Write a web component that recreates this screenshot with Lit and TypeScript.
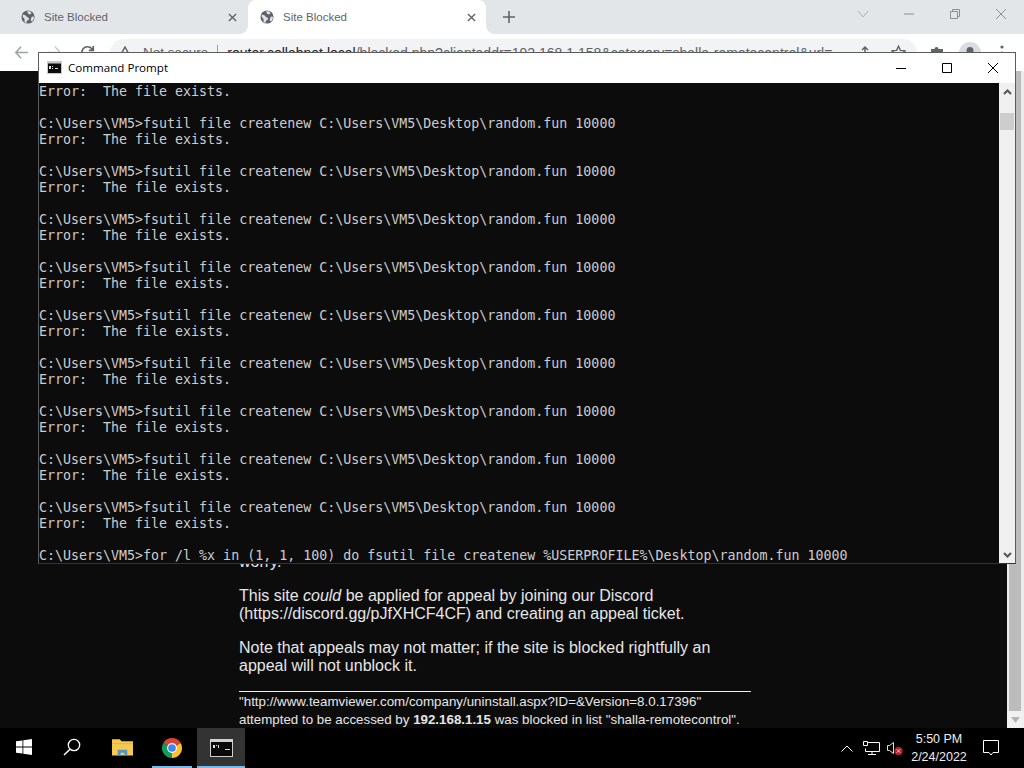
import { LitElement, html, css } from "lit";
import { customElement } from "lit/decorators.js";

const CMD = "C:\\Users\\VM5>fsutil file createnew C:\\Users\\VM5\\Desktop\\random.fun 10000";
const ERR = "Error:  The file exists.";
const lines: string[] = [ERR, ""];
for (let i = 0; i < 9; i++) lines.push(CMD, ERR, "");
lines.push("C:\\Users\\VM5>for /l %x in (1, 1, 100) do fsutil file createnew %USERPROFILE%\\Desktop\\random.fun 10000");

const globe = html`<svg class="fav" viewBox="0 0 16 16"><circle cx="8" cy="8" r="7.5" fill="#5f6368"/><path d="M2 5l3 1 2 2 2 1v2l-2 1-1 3-2-2v-3L2 8zM8 1l3 1 1 2-2 1-2-1-1-2zM12 8l2-1 1 2-2 4-2-1z" fill="#dee1e6"/></svg>`;
const tabClose = html`<svg class="tabx" viewBox="0 0 10 10"><path d="M1 1l8 8M9 1l-8 8" stroke="#5f6368" stroke-width="1.5"/></svg>`;

@customElement("app-root")
export class AppRoot extends LitElement {
  static styles = css`
    :host { display: block; width: 1024px; height: 768px; overflow: hidden; position: relative; background: #000; font-family: "Liberation Sans", Arial, sans-serif; }
    .browser { height: 728px; display: flex; flex-direction: column; }
    .tabstrip { height: 34px; background: #e3e6e9; display: flex; align-items: stretch; color: #5f6368; font-size: 11.5px; }
    .tab { width: 239px; display: flex; align-items: center; padding: 0 0 0 21px; box-sizing: border-box; gap: 9px; position: relative; }
    .tab.active { background: #fff; border-radius: 8px 8px 0 0; margin-left: 9px; width: 238px; padding: 0 8px 0 12px; }
    .tab.active::before, .tab.active::after { content: ""; position: absolute; bottom: 0; width: 8px; height: 8px; }
    .tab.active::before { left: -8px; background: radial-gradient(circle at 0 0, transparent 7.5px, #fff 8px); }
    .tab.active::after { right: -8px; background: radial-gradient(circle at 100% 0, transparent 7.5px, #fff 8px); }
    .tab span { flex: 1; }
    .fav { width: 14px; height: 14px; }
    .tabx { width: 9px; height: 9px; margin-right: 2.5px; }
    .plus { width: 14px; height: 14px; margin: 10px 0 0 16px; }
    .chrome-btns { margin-left: auto; display: flex; align-items: center; gap: 34px; padding: 0 17px 6px 0; }
    .chrome-btns svg { width: 12px; height: 12px; display: block; }
    .toolbar { height: 37px; background: #fff; display: flex; align-items: center; padding: 0 20px 0 14px; color: #5f6368; font-size: 14px; overflow: hidden; }
    .toolbar .nav { width: 15px; height: 15px; margin-right: 18px; flex: none; }
    .toolbar .nav.last { margin-right: 15px; }
    .omni { flex: 1; height: 28px; border-radius: 14px; background: #f1f3f4; display: flex; align-items: center; padding: 0 11px 0 8px; white-space: nowrap; overflow: hidden; min-width: 0; }
    .warn { flex: none; margin-right: 11px; }
    .ns { font-size: 13.5px; flex: none; }
    .omni b { font-weight: 400; color: #202124; }
    .omni i { display: inline-block; width: 1px; height: 16px; background: #9aa0a6; margin: 0 9px; flex: none; }
    .url { flex: 1; min-width: 0; overflow: hidden; }
    .omni svg.act { flex: none; margin-left: 18px; }
    .tool { flex: none; }
    .puzzle { margin-left: 13px; }
    .avatar { margin-left: 14px; }
    .menu { margin-left: 19px; }
    .page { flex: 1; min-height: 0; display: flex; background: #0c0c0c; overflow: hidden; }
    .content { margin-left: 239px; width: 512px; padding-top: 482px; color: #e6e6e6; font-size: 16px; line-height: 18px; flex: none; }
    .content p { margin: 0 0 16px; }
    .content hr { border: 0; height: 1px; background: #f0f0f0; margin: 16px 0 1px; }
    .small { font-size: 13.33px; line-height: 18px; }
    .vbar { margin-left: auto; width: 17px; flex: none; background: #ececec; display: flex; flex-direction: column; }
    .vbar .thumb { flex: 1; background: #bcbcbc; margin: 0 3px 0 2px; }
    .vbar .end { height: 17px; display: flex; align-items: center; justify-content: center; background: #f1f1f1; }
    .vbar svg { width: 9px; height: 6px; }
    .cmd { position: absolute; left: 38px; top: 52px; width: 978px; height: 512px; box-sizing: border-box; border: 1px solid #5c5c5c; border-bottom-color: #333; background: #fff; display: flex; flex-direction: column; }
    .title { height: 30px; flex: none; display: flex; align-items: center; color: #000; padding-left: 8px; gap: 6px; }
    .title .ic { width: 15px; height: 13px; margin-bottom: 1px; }
    .title span { flex: 1; font-family: "Open Sans", "Liberation Sans", sans-serif; font-size: 11.6px; padding-bottom: 2px; }
    .wbtns { display: flex; height: 30px; margin-right: -1px; }
    .wb { width: 46px; display: flex; align-items: center; justify-content: center; padding-bottom: 1px; box-sizing: border-box; }
    .wb svg { width: 12px; height: 12px; }
    .term { flex: 1; min-height: 0; display: flex; }
    .console { flex: 1; background: #0c0c0c; color: #cccccc; font-family: "DejaVu Sans Mono", monospace; font-size: 13.3px; line-height: 16px; white-space: pre; overflow: hidden; min-width: 0; padding-top: 1px; }
    .console div { height: 16px; }
    .sb { width: 16px; background: #f0f0f0; display: flex; flex-direction: column; flex: none; }
    .sb .arrow { height: 17px; display: flex; align-items: center; justify-content: center; }
    .sb .arrow svg { width: 9px; height: 6px; }
    .sb .track { flex: 1; padding: 13px 0 0; display: flex; }
    .sb .track div { width: 14px; height: 17px; background: #cdcdcd; margin-left: 1px; }
    .taskbar { height: 40px; background: #000; display: flex; align-items: stretch; color: #fff; }
    .tb { width: 48px; display: flex; align-items: center; justify-content: center; box-sizing: border-box; border-bottom: 2px solid transparent; flex: none; }
    .tb.folder { margin-left: 2px; }
    .tb.open { border-bottom-color: #76b9ed; padding-top: 2px; width: 40px; margin: 0 5px 0 6px; }
    .tb.open.cur { background: #333; width: 48px; margin: 0; }
    .tray { margin-left: auto; display: flex; align-items: center; }
    .clock { font-size: 12.5px; line-height: 18px; text-align: center; width: 60px; color: #eee; margin: 0 14px 0 6px; }
    .chev { width: 12px; height: 7px; margin-right: 10px; }
    .net { margin-right: 7px; }
    .note { margin-right: 25px; }
  `;

  render() {
    return html`
      <div class="browser">
        <div class="tabstrip">
          <div class="tab">${globe}<span>Site Blocked</span>${tabClose}</div>
          <div class="tab active">${globe}<span>Site Blocked</span>${tabClose}</div>
          <svg class="plus" viewBox="0 0 14 14"><path d="M7 1v12M1 7h12" stroke="#5f6368" stroke-width="1.6"/></svg>
          <div class="chrome-btns">
            <svg viewBox="0 0 12 12"><path d="M1 3l5 6 5-6" fill="none" stroke="#aab0b6"/></svg>
            <svg viewBox="0 0 12 12"><path d="M1 6h10" stroke="#8b9096"/></svg>
            <svg viewBox="0 0 12 12"><path d="M1.5 3.5h7v7h-7zM3.5 3.5v-2h7v7h-2" fill="none" stroke="#8b9096"/></svg>
            <svg viewBox="0 0 12 12"><path d="M1 1l10 10M11 1L1 11" stroke="#8b9096"/></svg>
          </div>
        </div>
        <div class="toolbar">
          <svg class="nav" viewBox="0 0 17 17"><path d="M16 8.5H2M8 2L2 8.5 8 15" fill="none" stroke="#9aa0a6" stroke-width="1.7"/></svg>
          <svg class="nav" viewBox="0 0 17 17"><path d="M1 8.5h14M9 2l6 6.500-6 6.500" fill="none" stroke="#c4c7cb" stroke-width="1.7"/></svg>
          <svg class="nav last" viewBox="0 0 17 17"><path d="M14 5A6.500 6.500 0 1 0 15 9M15 1v5h-5" fill="none" stroke="#5f6368" stroke-width="1.9"/></svg>
          <div class="omni">
            <svg class="warn" width="14" height="14" viewBox="0 0 14 14"><path d="M7 1l6.500 12h-13z" fill="none" stroke="#5f6368" stroke-width="1.500"/></svg>
            <span class="ns">Not secure</span><i></i><span class="url"><b>router.collabnet.local</b>/blocked.php?clientaddr=192.168.1.158&amp;category=shalla-remotecontrol&amp;url=</span>
            <svg class="act" width="16" height="16" viewBox="0 0 16 16"><path d="M2 7v7h12V7M8 10V2M5 5l3-3 3 3" fill="none" stroke="#5f6368" stroke-width="1.500"/></svg>
            <svg class="act" width="15" height="15" viewBox="0 0 15 15"><path d="M7.500 1.200l1.900 4.200 4.600.5-3.400 3.100 1 4.500-4.100-2.300-4.100 2.300 1-4.500L1 5.900l4.600-.5z" fill="none" stroke="#5f6368" stroke-width="1.400"/></svg>
          </div>
          <svg class="tool puzzle" width="15" height="15" viewBox="0 0 15 15"><path d="M1 4h3.500a2 2 0 0 1 4 0H13v4a2 2 0 0 1 0 4v2H1z" fill="#5f6368"/></svg>
          <svg class="tool avatar" width="22" height="22" viewBox="0 0 22 22"><circle cx="11" cy="11" r="11" fill="#dadce0"/><circle cx="11" cy="8.500" r="3.500" fill="#5f6368"/><path d="M4.500 17c1.500-3.500 11.500-3.500 13 0-3 3-10 3-13 0z" fill="#5f6368"/></svg>
          <svg class="tool menu" width="4" height="16" viewBox="0 0 4 16"><circle cx="2" cy="2" r="1.600" fill="#5f6368"/><circle cx="2" cy="8" r="1.600" fill="#5f6368"/><circle cx="2" cy="14" r="1.600" fill="#5f6368"/></svg>
        </div>
        <div class="page">
          <div class="content">
            <p>worry.</p>
            <p>This site <em>could</em> be applied for appeal by joining our Discord (https://discord.gg/pJfXHCF4CF) and creating an appeal ticket.</p>
            <p>Note that appeals may not matter; if the site is blocked rightfully an appeal will not unblock it.</p>
            <hr />
            <div class="small">
              <div>"http://www.teamviewer.com/company/uninstall.aspx?ID=&amp;Version=8.0.17396"</div>
              <div>attempted to be accessed by <strong>192.168.1.15</strong> was blocked in list "shalla-remotecontrol".</div>
            </div>
          </div>
          <div class="vbar">
            <div class="thumb"></div>
            <div class="end"><svg viewBox="0 0 9 6"><path d="M0 0h9L4.500 6z" fill="#b4b4b4"/></svg></div>
          </div>
        </div>
      </div>

      <div class="cmd">
        <div class="title">
          <svg class="ic" viewBox="0 0 15 13"><rect width="15" height="13" fill="#c8c8c8"/><rect x="1" y="2.500" width="13" height="9.500" fill="#0c0c0c"/><path d="M2 5h2v3H2zM5 5h1v1H5zM5 7h1v1H5zM8 7h3v1H8z" fill="#ddd"/></svg>
          <span>Command Prompt</span>
          <div class="wbtns">
            <div class="wb"><svg viewBox="0 0 12 12"><path d="M1 6.500h10" stroke="#000"/></svg></div>
            <div class="wb"><svg viewBox="0 0 12 12"><path d="M1.500 1.500h9v9h-9z" fill="none" stroke="#000"/></svg></div>
            <div class="wb"><svg viewBox="0 0 12 12"><path d="M1 1l10 10M11 1L1 11" stroke="#000"/></svg></div>
          </div>
        </div>
        <div class="term">
          <div class="console">${lines.map((l) => html`<div>${l}</div>`)}</div>
          <div class="sb">
            <div class="arrow"><svg viewBox="0 0 9 6"><path d="M1 5l3.500-3.500L8 5" fill="none" stroke="#555" stroke-width="2"/></svg></div>
            <div class="track"><div></div></div>
            <div class="arrow"><svg viewBox="0 0 9 6"><path d="M1 1l3.500 3.500L8 1" fill="none" stroke="#555" stroke-width="2"/></svg></div>
          </div>
        </div>
      </div>

      <div class="taskbar">
        <div class="tb"><svg width="16" height="16" viewBox="0 0 16 16"><path d="M0 2.300l6.500-.9v6.200H0zM7.300 1.300L16 0v7.600H7.300zM0 8.400h6.500v6.200L0 13.700zM7.300 8.400H16V16l-8.700-1.200z" fill="#fff"/></svg></div>
        <div class="tb"><svg width="18" height="18" viewBox="0 0 18 18"><circle cx="11" cy="7" r="5.700" fill="none" stroke="#fff" stroke-width="1.300"/><path d="M7 11.200L1 17" stroke="#fff" stroke-width="1.500"/></svg></div>
        <div class="tb folder"><svg width="21" height="18" viewBox="0 0 22 18"><path d="M0 1h8l2 2h12v15H0z" fill="#f6c94f"/><path d="M0 5h22v1H0z" fill="#e8b23a"/><path d="M6 18v-6h10v6h-3v-3H9v3z" fill="#4f95c9"/></svg></div>
        <div class="tb open"><svg width="22" height="22" viewBox="0 0 24 24"><path d="M12 12L2.500 6.500A11 11 0 0 1 21.500 6.500z" fill="#db4437"/><path d="M12 12L21.500 6.500A11 11 0 0 1 12 23z" fill="#fbc02d"/><path d="M12 12L12 23A11 11 0 0 1 2.500 6.500z" fill="#0f9d58"/><circle cx="12" cy="12" r="5.400" fill="#fff"/><circle cx="12" cy="12" r="4.200" fill="#4285f4"/></svg></div>
        <div class="tb open cur"><svg width="23" height="18" viewBox="0 0 23 18"><rect width="23" height="18" fill="#d0d0d0"/><rect x="1" y="3" width="21" height="14" fill="#0a0a0a"/><path d="M3 6h2v3H3zM6 6h1v1H6zM8 6h1v3H8zM15 10h5v1h-5z" fill="#ddd"/></svg></div>
        <div class="tray">
          <svg class="chev" viewBox="0 0 12 7"><path d="M.5 6.500L6 1l5.500 5.500" fill="none" stroke="#fff"/></svg>
          <svg class="net" width="17" height="14" viewBox="0 0 17 14"><path d="M4.500 1.500h12v9h-14v-3M9 10.500v3M5 13.500h8M.5.500h4v4h-4z" fill="none" stroke="#fff"/></svg>
          <svg width="16" height="14" viewBox="0 0 16 14"><path d="M.5 4.500h2l4-3v11l-4-3h-2z" fill="none" stroke="#ddd"/><circle cx="11.500" cy="10" r="4.200" fill="#b3202c"/><path d="M9.700 8.200l3.600 3.600M13.300 8.200l-3.600 3.600" stroke="#f4c6c6"/></svg>
          <div class="clock"><div>5:50 PM</div><div>2/24/2022</div></div>
          <svg class="note" width="16" height="16" viewBox="0 0 16 16"><path d="M.5.500h15v12h-5.500l-2 2.500-2-2.500H.5z" fill="none" stroke="#fff"/></svg>
        </div>
      </div>
    `;
  }
}
